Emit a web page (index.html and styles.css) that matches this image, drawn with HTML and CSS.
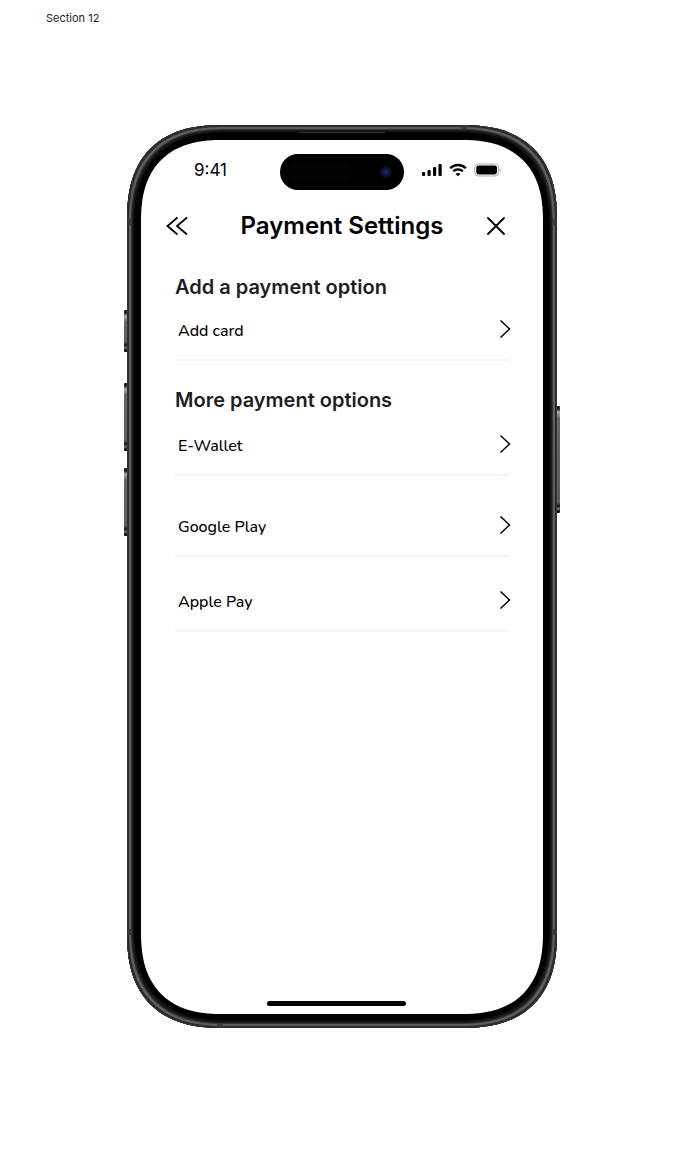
FILE: index.html
```html
<!DOCTYPE html>
<html lang="en">
<head>
<meta charset="utf-8">
<meta name="viewport" content="width=device-width, initial-scale=1">
<title>Payment Settings</title>
<link rel="stylesheet" href="styles.css">
</head>
<body>
<p class="section-label">Section 12</p>
<div class="phone">
  <span class="side-key key-action"></span>
  <span class="side-key key-up"></span>
  <span class="side-key key-down"></span>
  <span class="side-key key-power"></span>
  <span class="antenna antenna-top"></span>
  <span class="antenna antenna-bottom"></span>
  <span class="antenna antenna-left-upper"></span>
  <span class="antenna antenna-left-lower"></span>
  <span class="antenna antenna-right-upper"></span>
  <span class="antenna antenna-right-lower"></span>
  <span class="earpiece"></span>
  <div class="screen">
    <div class="status">
      <span class="time">9:41</span>
      <span class="island"><span class="sensor"></span><span class="lens"></span></span>
      <span class="indicators">
        <svg width="20" height="14" viewBox="0 0 20 14" aria-hidden="true">
          <rect x="0" y="9" width="3.2" height="4" rx="1"/><rect x="5.5" y="7" width="3.2" height="6" rx="1"/><rect x="11" y="4" width="3.2" height="9" rx="1"/><rect x="16.5" y="1" width="3.2" height="12" rx="1"/>
        </svg>
        <svg width="18" height="14" viewBox="0 0 18 14" aria-hidden="true" fill="none" stroke="#000" stroke-width="2.3">
          <path d="M1.2 5.3C5.500.9 12.500.9 16.800 5.3M4.200 8.300c2.700-2.700 6.900-2.700 9.600 0"/><path d="M9 13.300 6.500 10.900c1.300-1.200 3.700-1.200 5 0z" fill="#000" stroke="none"/>
        </svg>
        <svg width="27" height="14" viewBox="0 0 27 14" aria-hidden="true">
          <rect x=".6" y="1" width="24" height="12" rx="3.800" fill="none" stroke="#aaa"/><rect x="2.200" y="2.500" width="20.800" height="9" rx="2.400"/><path d="M25.700 5v4.200c1.300-.6 1.300-3.600 0-4.200z" fill="#aaa"/>
        </svg>
      </span>
    </div>
    <header class="header">
      <button class="icon-button" type="button" aria-label="Back">
        <svg width="22" height="20" viewBox="0 0 22 20" fill="none" stroke="#000" stroke-width="1.800"><path d="M11.500 1.500 1.500 10l10 8.500M21 1.500 11 10l10 8.500"/></svg>
      </button>
      <h1 class="title">Payment Settings</h1>
      <button class="icon-button close" type="button" aria-label="Close">
        <svg width="18" height="18" viewBox="0 0 18 18" fill="none" stroke="#000" stroke-width="1.800" stroke-linecap="round"><path d="m1 1 16 16M17 1 1 17"/></svg>
      </button>
    </header>
    <main class="content">
      <h2 class="group-title">Add a payment option</h2>
      <button class="row" type="button"><span>Add card</span><svg class="chevron" width="12" height="20" viewBox="0 0 12 20"><path d="m1.500 1.500 9 8.500-9 8.500"/></svg></button>
      <h2 class="group-title group-next">More payment options</h2>
      <button class="row" type="button"><span>E-Wallet</span><svg class="chevron" width="12" height="20" viewBox="0 0 12 20"><path d="m1.500 1.500 9 8.500-9 8.500"/></svg></button>
      <button class="row row-google" type="button"><span>Google Play</span><svg class="chevron" width="12" height="20" viewBox="0 0 12 20"><path d="m1.500 1.500 9 8.500-9 8.500"/></svg></button>
      <button class="row row-apple" type="button"><span>Apple Pay</span><svg class="chevron" width="12" height="20" viewBox="0 0 12 20"><path d="m1.500 1.500 9 8.500-9 8.500"/></svg></button>
    </main>
    <div class="home-indicator"></div>
  </div>
</div>
</body>
</html>
```
FILE: styles.css
```css
* { box-sizing: border-box; }
body {
  margin: 0;
  padding: 10px 24px 127px;
  background: #fff;
  color: #000;
  font-family: Inter, "Liberation Sans", sans-serif;
}
.section-label {
  margin: 0 0 99px 22px;
  font-size: 11px;
  line-height: 16px;
  color: #1e1e1e;
}
.phone {
  position: relative;
  display: flex;
  max-width: 430px;
  min-height: 903px;
  margin: 0 auto;
  padding: 15px 14px 14px;
  border-radius: 80px;
  background: #000;
  box-shadow:
    inset 0 0 0 1px #303131,
    inset 0 0 1px 2px #242525,
    inset 0 0 1px 4px #626363,
    inset 0 0 1px 5px #303030,
    inset 0 0 2px 7px #1b1b1b;
}
.side-key {
  position: absolute;
  left: -3px;
  width: 3px;
  border-radius: 1px 0 0 1px;
  background: linear-gradient(#222 0 3px, #aaa 6px, #666 12px, #5c5d58 calc(100% - 10px), #111 calc(100% - 7px), #777 calc(100% - 4px), #111 calc(100% - 2px));
}
.key-action { top: 185px; height: 42px; }
.key-up { top: 258px; height: 68px; }
.key-down { top: 343px; height: 68px; }
.key-power {
  top: 281px;
  right: -3px;
  left: auto;
  height: 107px;
  border-radius: 0 1px 1px 0;
}
.antenna {
  position: absolute;
  width: 4px;
  height: 6px;
  background: #3a3a3a;
}
.antenna-top { top: 1px; right: 90px; width: 6px; height: 4px; }
.antenna-bottom { bottom: 1px; left: 90px; width: 6px; height: 4px; }
.antenna-left-upper { top: 94px; left: 1px; }
.antenna-left-lower { bottom: 93px; left: 1px; }
.antenna-right-upper { top: 94px; right: 1px; }
.antenna-right-lower { bottom: 93px; right: 1px; }
.earpiece {
  position: absolute;
  top: 7px;
  left: 40%;
  width: 20%;
  height: 1px;
  background: #333;
}
.screen {
  flex: 1;
  display: flex;
  flex-direction: column;
  min-width: 0;
  padding: 14px 0 8px;
  border-radius: 67px;
  background: #fff;
}
@supports (corner-shape: superellipse(1.3)) {
  .phone { border-radius: 96px; corner-shape: superellipse(1.3); }
  .screen { border-radius: 82px; corner-shape: superellipse(1.3); }
}
.status {
  display: grid;
  grid-template-columns: 1fr 124px 1fr;
  align-items: center;
}
.time {
  padding-bottom: 5px;
  text-align: center;
  font-size: 17px;
  line-height: 20px;
  font-weight: 400;
}
.island {
  display: flex;
  align-items: center;
  justify-content: space-between;
  height: 36px;
  padding: 0 12px 0 8px;
  border-radius: 18px;
  background: #000;
}
.sensor {
  width: 64px;
  height: 22px;
  border-radius: 11px;
  background: #030303;
}
.lens {
  width: 12px;
  height: 12px;
  border-radius: 50%;
  background: radial-gradient(circle, #202966 0 1px, #10143e 3px, #0b0d28 5px, #08050a 6px);
}
.indicators {
  display: flex;
  align-items: center;
  gap: 7px;
  padding: 0 0 5px 18px;
}
.indicators svg { flex: none; }
.header {
  display: grid;
  grid-template-columns: 1fr auto 1fr;
  align-items: center;
  height: 42px;
  margin: 15px 25px 26px;
}
.icon-button {
  display: flex;
  justify-self: start;
  padding: 0;
  border: 0;
  background: none;
}
.close { justify-self: end; padding-right: 13px; }
.title {
  margin: 0;
  font-size: 24px;
  line-height: 42px;
  font-weight: 600;
  white-space: nowrap;
}
.content {
  flex: 1;
  display: flex;
  flex-direction: column;
  padding: 0 34px;
}
.group-title {
  margin: 0;
  font-size: 20px;
  line-height: 28px;
  font-weight: 600;
  color: #1e1e1e;
}
.group-next { margin: 25px 0 2px; }
.row {
  display: flex;
  align-items: center;
  justify-content: space-between;
  height: 60px;
  padding: 2px 0 0 3px;
  border: 0;
  border-bottom: 2px solid #f9f3f5;
  background: none;
  color: #000;
  font-family: Nunito, Lato, sans-serif;
  font-size: 16px;
  line-height: 24px;
  font-weight: 500;
  text-align: left;
}
.row-google { margin-top: 21px; }
.row-apple { margin-top: 15px; }
.chevron {
  flex: none;
  margin: 0 -2px 5px 0;
  fill: none;
  stroke: #000;
  stroke-width: 1.5;
}
.home-indicator {
  width: 139px;
  height: 5px;
  margin: 0 137px 0 auto;
  border-radius: 3px;
  background: #000;
}
```
